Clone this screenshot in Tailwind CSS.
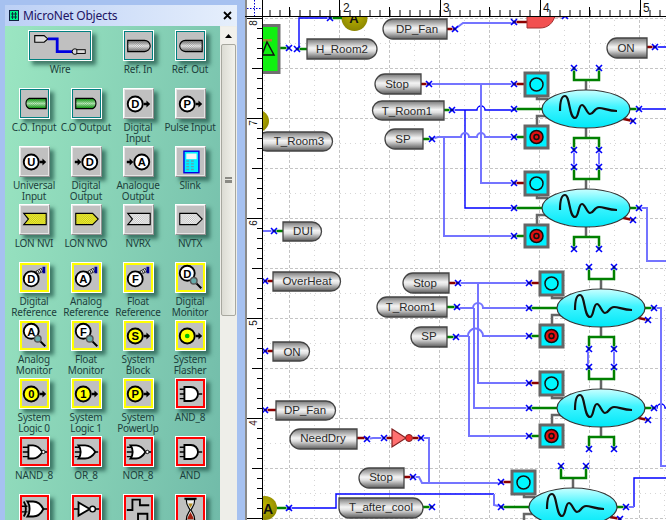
<!DOCTYPE html>
<html>
<head>
<meta charset="utf-8">
<script src="https://cdn.jsdelivr.net/npm/@tailwindcss/browser@4"></script>
</head>
<body class="m-0 overflow-hidden bg-white">
<svg class="absolute w-0 h-0" aria-hidden="true">
  <defs>
    <linearGradient id="gw" x1="0" y1="0" x2="0" y2="1"><stop offset="0" stop-color="#777"/><stop offset=".5" stop-color="#fff"/><stop offset="1" stop-color="#777"/></linearGradient>
    <linearGradient id="gg" x1="0" y1="0" x2="0" y2="1"><stop offset="0" stop-color="#00a000"/><stop offset=".5" stop-color="#c0ffc0"/><stop offset="1" stop-color="#00a000"/></linearGradient>
    <pattern id="chk" width="2" height="2" patternUnits="userSpaceOnUse"><rect width="1" height="1" fill="#000" fill-opacity=".28"/><rect x="1" y="1" width="1" height="1" fill="#000" fill-opacity=".28"/></pattern>
    <g id="arw"><path d="M0,-1.300H3V-3.800L7,0L3,3.800V1.300H0Z" fill="#000"/></g>
    <symbol id="i-wire" viewBox="0 0 64 31"><path d="M5,5H15L19,8.500L15,12H5Z" fill="#ddd" stroke="#000" stroke-width="1.200"/><path d="M19,8.500H29V22H47" fill="none" stroke="#0000e0" stroke-width="3"/><circle cx="48" cy="22" r="3" fill="#ddd" stroke="#000"/><rect x="50" y="20" width="9" height="4" fill="#ddd" stroke="#000"/></symbol>
    <symbol id="i-refin" viewBox="0 0 31 31"><path d="M4,10H22A6,6 0 0 1 22,22H4Z" fill="url(#gw)"/><path d="M4,10H22A6,6 0 0 1 22,22H4Z" fill="url(#chk)" stroke="#000" stroke-width="1.200"/></symbol>
    <symbol id="i-refout" viewBox="0 0 31 31"><path d="M28,10H10A6,6 0 0 0 10,22H28Z" fill="url(#gw)"/><path d="M28,10H10A6,6 0 0 0 10,22H28Z" fill="url(#chk)" stroke="#000" stroke-width="1.200"/></symbol>
    <symbol id="i-coin" viewBox="0 0 31 31"><path d="M28,10H10A6,6 0 0 0 10,21H28Z" fill="url(#gg)"/><path d="M28,10H10A6,6 0 0 0 10,21H28Z" fill="url(#chk)" stroke="#000" stroke-width="1.200"/></symbol>
    <symbol id="i-coout" viewBox="0 0 31 31"><path d="M4,10H22A6,6 0 0 1 22,21H4Z" fill="url(#gg)"/><path d="M4,10H22A6,6 0 0 1 22,21H4Z" fill="url(#chk)" stroke="#000" stroke-width="1.200"/></symbol>
    <symbol id="i-nvi" viewBox="0 0 31 31"><path d="M4,9H28V21H4L9,15Z" fill="#ffff30" stroke="#000" stroke-width="1.200"/><path d="M4,9H28V21H4L9,15Z" fill="url(#chk)"/></symbol>
    <symbol id="i-nvo" viewBox="0 0 31 31"><path d="M4,9H22L28,15L22,21H4Z" fill="#ffff30" stroke="#000" stroke-width="1.200"/><path d="M4,9H22L28,15L22,21H4Z" fill="url(#chk)"/></symbol>
    <symbol id="i-nvrx" viewBox="0 0 31 31"><path d="M4,9H28V21H4L9,15Z" fill="#fff" stroke="#000" stroke-width="1.200"/><path d="M4,9H28V21H4L9,15Z" fill="url(#chk)"/></symbol>
    <symbol id="i-nvtx" viewBox="0 0 31 31"><path d="M4,9H22L28,15L22,21H4Z" fill="#fff" stroke="#000" stroke-width="1.200"/><path d="M4,9H22L28,15L22,21H4Z" fill="url(#chk)"/></symbol>
    <symbol id="i-slink" viewBox="0 0 31 31"><rect x="8.500" y="4.500" width="16" height="23" fill="#00f0ff" stroke="#0000e0" stroke-width="1.500"/><rect x="11" y="7" width="11" height="6" fill="#f4f4f4"/><path d="M11,15h3M16,15h3M11,18h3M16,18h3M11,21h3M16,21h3M11,24h3M16,24h3" stroke="#60a0b0" stroke-width="1.500"/></symbol>
    <symbol id="i-ref" viewBox="0 0 31 31"><path d="M15,12L24,7" stroke="#222" stroke-width="4.500"/><path d="M15,12L24,7" stroke="#fff" stroke-width="3" stroke-dasharray="1 1"/><rect x="24" y="4" width="3" height="7" fill="#000090"/><circle cx="12" cy="17" r="8" fill="#fff" stroke="#000" stroke-width="2"/></symbol>
    <symbol id="i-mon" viewBox="0 0 31 31"><circle cx="12" cy="11" r="8" fill="#fff" stroke="#000" stroke-width="2"/><path d="M21,21L27,27" stroke="#000" stroke-width="2.200"/><circle cx="19" cy="19" r="3.500" fill="#6aa" stroke="#555" stroke-width="1.500"/></symbol>
    <symbol id="i-nand" viewBox="0 0 31 31"><path d="M3,11H9M3,16H9M3,21H9M22,16H29" stroke="#000" stroke-width="1.500"/><path d="M9,9H14C19,9 22,13 24,16C22,19 19,23 14,23H9Z" fill="#fff" stroke="#000" stroke-width="2"/><circle cx="25" cy="16" r="1.800" fill="#fff" stroke="#000"/></symbol>
    <symbol id="i-and" viewBox="0 0 31 31"><path d="M4,11H9M4,16H9M4,21H9M24,16H28" stroke="#000" stroke-width="1.500"/><path d="M9,8.500H16A7.500,7.500 0 0 1 16,23.500H9Z" fill="#fff" stroke="#000" stroke-width="2"/></symbol>
    <symbol id="i-or" viewBox="0 0 31 31"><path d="M3,11H10M3,16H11M3,21H10M24,16H28" stroke="#000" stroke-width="1.500"/><path d="M7,9H14C19,9 23,13 25,16C23,19 19,23 14,23H7C10,19 10,13 7,9Z" fill="#fff" stroke="#000" stroke-width="2"/></symbol>
    <symbol id="i-nor" viewBox="0 0 31 31"><path d="M3,11H10M3,16H11M3,21H10M25,16H29" stroke="#000" stroke-width="1.500"/><path d="M7,9H13C18,9 21,13 23,16C21,19 18,23 13,23H7C10,19 10,13 7,9Z" fill="#fff" stroke="#000" stroke-width="2"/><circle cx="25" cy="16" r="1.800" fill="#fff" stroke="#000"/></symbol>
    <symbol id="i-xor" viewBox="0 0 31 31"><path d="M2,12H8M2,18H8M25,15H29" stroke="#000" stroke-width="1.500"/><path d="M4,7C7,11 7,19 4,23" fill="none" stroke="#000" stroke-width="2"/><path d="M8,7H14C19,7 23,11 25,15C23,19 19,23 14,23H8C11,19 11,11 8,7Z" fill="#fff" stroke="#000" stroke-width="2"/></symbol>
    <symbol id="i-not" viewBox="0 0 31 31"><path d="M2,15H7M25,15H29" stroke="#000" stroke-width="1.500"/><path d="M7,8L19,15L7,22Z" fill="#fff" stroke="#000" stroke-width="2"/><circle cx="22" cy="15" r="3" fill="#fff" stroke="#000" stroke-width="1.500"/></symbol>
    <symbol id="i-step" viewBox="0 0 31 31"><path d="M3,16H9V5H17V11H27M3,28H15V20H25V28H29" fill="none" stroke="#000" stroke-width="2"/></symbol>
    <symbol id="i-hour" viewBox="0 0 31 31"><path d="M9,4H22M9,28H22" stroke="#000" stroke-width="2"/><path d="M11,5C11,12 14,13 15,16C14,19 11,20 11,27H20C20,20 17,19 16,16C17,13 20,12 20,5Z" fill="#f0f0f0" stroke="#000" stroke-width="1.200"/><path d="M12,26C13,22 15,20 15.500,18C16,20 18,22 19,26Z" fill="#a02010"/><path d="M13,9H18L15.500,14Z" fill="#b08a20"/></symbol>
    <g id="mk"><path d="M-3,-3L3,3M-3,3L3,-3" stroke="#0000ff" stroke-width="1.600"/><rect x="-1" y="-1" width="2" height="2" fill="#00008c"/><path d="M-3,0H-2M2,0H3M0,-3V-2M0,2V3" stroke="#fff" stroke-width="1"/></g>
    <linearGradient id="pill" x1="0" y1="0" x2="0" y2="1"><stop offset="0" stop-color="#777"/><stop offset=".45" stop-color="#f4f4f4"/><stop offset=".6" stop-color="#e0e0e0"/><stop offset="1" stop-color="#5c5c5c"/></linearGradient>
    <linearGradient id="ell" x1="0" y1="0" x2="0" y2="1"><stop offset="0" stop-color="#c8ffff"/><stop offset=".45" stop-color="#40f4ff"/><stop offset="1" stop-color="#00e8f8"/></linearGradient>
    <radialGradient id="olive" cx=".5" cy=".4" r=".6"><stop offset="0" stop-color="#bdb500"/><stop offset="1" stop-color="#8c8600"/></radialGradient>
    <g id="grp">
      <path d="M-49,-12V-10H-38M-49,16V7H-40M0,-19V-29M0,19V29" fill="none" stroke="#666" stroke-width="2.500"/>
      <path d="M-72,0H-44M-72,28H-62M-12,-41V-29H13V-41M-12,41V29H13V41M44,0H53" fill="none" stroke="#008000" stroke-width="2.500"/>
      <path d="M-72,-25H-62M33,9L47,12" fill="none" stroke="#8b0000" stroke-width="2.500"/>
      <ellipse rx="44" ry="19" fill="url(#ell)" stroke="#333" stroke-width="1.200"/>
      <path d="M-26,2C-26,-8 -24,-13 -21,-13C-16,-13 -17,9 -11,9C-7,9 -8,-4 -4,-4C-1,-4 1,5 4,5C8,5 8,-1 13,-1C18,-1 22,2 31,2" fill="none" stroke="#111" stroke-width="2.200"/>
      <rect x="-61" y="-36" width="23" height="23" fill="#00f0ff" stroke="#666" stroke-width="3"/>
      <circle cx="-49.500" cy="-24.500" r="6.500" fill="#00f8ff" stroke="#111" stroke-width="1.500"/>
      <rect x="-61" y="17" width="23" height="22" fill="#00f0ff" stroke="#666" stroke-width="3"/>
      <circle cx="-49.500" cy="28" r="6.500" fill="#e01010" stroke="#111" stroke-width="1.500"/>
      <circle cx="-49.500" cy="28" r="2.500" fill="#e01010" stroke="#111" stroke-width="1.500"/>
      <use href="#mk" x="-72" y="-25"/><use href="#mk" x="-72" y="0"/><use href="#mk" x="-72" y="28"/>
      <use href="#mk" x="-12" y="-41"/><use href="#mk" x="13" y="-41"/><use href="#mk" x="-12" y="41"/><use href="#mk" x="13" y="41"/>
      <use href="#mk" x="53" y="0"/><use href="#mk" x="47" y="12"/>
    </g>
  </defs>
</svg>

<div class="flex w-[666px] h-[520px] overflow-hidden font-['Noto_Sans',sans-serif]">
  <!-- docked palette -->
  <div class="w-[245px] h-full shrink-0 bg-[#a6c1f0] pt-[5px] pl-[5px] pr-[8px] flex flex-col">
    <div class="h-[21px] shrink-0 flex items-center pl-[4px] pr-[5px] gap-[4px] bg-gradient-to-r from-[#bcd0f5] to-[#e6effc]">
      <svg class="w-[10px] h-[11px] shrink-0" viewBox="0 0 10 11"><rect x=".5" y=".5" width="9" height="10" fill="#00f08a" stroke="#102040"/><path d="M3.500,2V9M6.500,2V9M2,4H8M2,7H8" stroke="#103040"/></svg>
      <span class="flex-1 text-[12px] tracking-[-0.2px] leading-none text-[#1d1464]">MicroNet Objects</span>
      <svg class="w-[9px] h-[9px] shrink-0" viewBox="0 0 9 9"><path d="M1,1L8,8M8,1L1,8" stroke="#000" stroke-width="1.800"/></svg>
    </div>
    <div class="flex-1 flex min-h-0">
      <div class="w-[215px] h-full overflow-hidden bg-[linear-gradient(100deg,#9be6c2,#71bba9)] pt-[4px] pl-[3px] text-[10px] tracking-[-0.2px] leading-[11px] text-[#1c3f3c] text-center">
        <div class="grid grid-cols-[repeat(4,52px)] auto-rows-[58px]">
          <div class="col-span-2 flex flex-col items-center"><div class="w-[64px] h-[31px] shrink-0 bg-[#c0c0c0] border border-white shadow-[inset_0_0_0_1px_#008080,4px_4px_4px_rgba(20,70,60,0.65)]"><svg class="block w-[62px] h-[29px]" viewBox="0 0 64 31"><use href="#i-wire"/></svg></div><div class="mt-[3px]">Wire</div></div>

          <div class="flex flex-col items-center"><div class="w-[31px] h-[31px] shrink-0 bg-[#c0c0c0] border border-white shadow-[inset_0_0_0_1px_#008080,4px_4px_4px_rgba(20,70,60,0.65)]"><svg class="block w-[29px] h-[29px]" viewBox="0 0 31 31"><use href="#i-refin"/></svg></div><div class="mt-[3px]">Ref. In</div></div>
          <div class="flex flex-col items-center"><div class="w-[31px] h-[31px] shrink-0 bg-[#c0c0c0] border border-white shadow-[inset_0_0_0_1px_#008080,4px_4px_4px_rgba(20,70,60,0.65)]"><svg class="block w-[29px] h-[29px]" viewBox="0 0 31 31"><use href="#i-refout"/></svg></div><div class="mt-[3px]">Ref. Out</div></div>

          <div class="flex flex-col items-center"><div class="w-[31px] h-[31px] shrink-0 bg-[#c0c0c0] border border-white shadow-[inset_0_0_0_1px_#008080,4px_4px_4px_rgba(20,70,60,0.65)]"><svg class="block w-[29px] h-[29px]" viewBox="0 0 31 31"><use href="#i-coin"/></svg></div><div class="mt-[3px] whitespace-nowrap">C.O. Input</div></div>
          <div class="flex flex-col items-center"><div class="w-[31px] h-[31px] shrink-0 bg-[#c0c0c0] border border-white shadow-[inset_0_0_0_1px_#008080,4px_4px_4px_rgba(20,70,60,0.65)]"><svg class="block w-[29px] h-[29px]" viewBox="0 0 31 31"><use href="#i-coout"/></svg></div><div class="mt-[3px] whitespace-nowrap">C.O Output</div></div>
          <div class="flex flex-col items-center"><div class="w-[31px] h-[31px] shrink-0 bg-[#c0c0c0] border border-white border-r-[#909090] border-b-[#909090] shadow-[inset_0_0_0_1px_#e4e4e4,4px_4px_4px_rgba(20,70,60,0.65)]"><svg class="block w-[29px] h-[29px]" viewBox="0 0 31 31"><circle cx="12" cy="16" r="8" fill="#fff" stroke="#000" stroke-width="2"/><text x="12" y="20.500" text-anchor="middle" font-family="Liberation Sans" font-weight="700" font-size="12">D</text><use href="#arw" x="21" y="16"/></svg></div><div class="mt-[3px]">Digital<br>Input</div></div>
          <div class="flex flex-col items-center"><div class="w-[31px] h-[31px] shrink-0 bg-[#c0c0c0] border border-white border-r-[#909090] border-b-[#909090] shadow-[inset_0_0_0_1px_#e4e4e4,4px_4px_4px_rgba(20,70,60,0.65)]"><svg class="block w-[29px] h-[29px]" viewBox="0 0 31 31"><circle cx="12" cy="16" r="8" fill="#fff" stroke="#000" stroke-width="2"/><text x="12" y="20.500" text-anchor="middle" font-family="Liberation Sans" font-weight="700" font-size="12">P</text><use href="#arw" x="21" y="16"/></svg></div><div class="mt-[3px] whitespace-nowrap">Pulse Input</div></div>

          <div class="flex flex-col items-center"><div class="w-[31px] h-[31px] shrink-0 bg-[#c0c0c0] border border-white border-r-[#909090] border-b-[#909090] shadow-[inset_0_0_0_1px_#e4e4e4,4px_4px_4px_rgba(20,70,60,0.65)]"><svg class="block w-[29px] h-[29px]" viewBox="0 0 31 31"><circle cx="12" cy="16" r="8" fill="#fff" stroke="#000" stroke-width="2"/><text x="12" y="20.500" text-anchor="middle" font-family="Liberation Sans" font-weight="700" font-size="12">U</text><use href="#arw" x="21" y="16"/></svg></div><div class="mt-[3px]">Universal<br>Input</div></div>
          <div class="flex flex-col items-center"><div class="w-[31px] h-[31px] shrink-0 bg-[#c0c0c0] border border-white border-r-[#909090] border-b-[#909090] shadow-[inset_0_0_0_1px_#e4e4e4,4px_4px_4px_rgba(20,70,60,0.65)]"><svg class="block w-[29px] h-[29px]" viewBox="0 0 31 31"><use href="#arw" x="3" y="16"/><circle cx="19" cy="16" r="8" fill="#fff" stroke="#000" stroke-width="2"/><text x="19" y="20.500" text-anchor="middle" font-family="Liberation Sans" font-weight="700" font-size="12">D</text></svg></div><div class="mt-[3px]">Digital<br>Output</div></div>
          <div class="flex flex-col items-center"><div class="w-[31px] h-[31px] shrink-0 bg-[#c0c0c0] border border-white border-r-[#909090] border-b-[#909090] shadow-[inset_0_0_0_1px_#e4e4e4,4px_4px_4px_rgba(20,70,60,0.65)]"><svg class="block w-[29px] h-[29px]" viewBox="0 0 31 31"><use href="#arw" x="3" y="16"/><circle cx="19" cy="16" r="8" fill="#fff" stroke="#000" stroke-width="2"/><text x="19" y="20.500" text-anchor="middle" font-family="Liberation Sans" font-weight="700" font-size="12">A</text></svg></div><div class="mt-[3px]">Analogue<br>Output</div></div>
          <div class="flex flex-col items-center"><div class="w-[31px] h-[31px] shrink-0 bg-[#c0c0c0] border border-white border-r-[#909090] border-b-[#909090] shadow-[inset_0_0_0_1px_#e4e4e4,4px_4px_4px_rgba(20,70,60,0.65)]"><svg class="block w-[29px] h-[29px]" viewBox="0 0 31 31"><use href="#i-slink"/></svg></div><div class="mt-[3px]">Slink</div></div>

          <div class="flex flex-col items-center"><div class="w-[31px] h-[31px] shrink-0 bg-[#c0c0c0] border border-white border-r-[#909090] border-b-[#909090] shadow-[inset_0_0_0_1px_#e4e4e4,4px_4px_4px_rgba(20,70,60,0.65)]"><svg class="block w-[29px] h-[29px]" viewBox="0 0 31 31"><use href="#i-nvi"/></svg></div><div class="mt-[3px] whitespace-nowrap">LON NVI</div></div>
          <div class="flex flex-col items-center"><div class="w-[31px] h-[31px] shrink-0 bg-[#c0c0c0] border border-white border-r-[#909090] border-b-[#909090] shadow-[inset_0_0_0_1px_#e4e4e4,4px_4px_4px_rgba(20,70,60,0.65)]"><svg class="block w-[29px] h-[29px]" viewBox="0 0 31 31"><use href="#i-nvo"/></svg></div><div class="mt-[3px] whitespace-nowrap">LON NVO</div></div>
          <div class="flex flex-col items-center"><div class="w-[31px] h-[31px] shrink-0 bg-[#c0c0c0] border border-white border-r-[#909090] border-b-[#909090] shadow-[inset_0_0_0_1px_#e4e4e4,4px_4px_4px_rgba(20,70,60,0.65)]"><svg class="block w-[29px] h-[29px]" viewBox="0 0 31 31"><use href="#i-nvrx"/></svg></div><div class="mt-[3px]">NVRX</div></div>
          <div class="flex flex-col items-center"><div class="w-[31px] h-[31px] shrink-0 bg-[#c0c0c0] border border-white border-r-[#909090] border-b-[#909090] shadow-[inset_0_0_0_1px_#e4e4e4,4px_4px_4px_rgba(20,70,60,0.65)]"><svg class="block w-[29px] h-[29px]" viewBox="0 0 31 31"><use href="#i-nvtx"/></svg></div><div class="mt-[3px]">NVTX</div></div>

          <div class="flex flex-col items-center"><div class="w-[31px] h-[31px] shrink-0 bg-[#c0c0c0] border border-white shadow-[inset_0_0_0_2px_#ffff00,4px_4px_4px_rgba(20,70,60,0.65)]"><svg class="block w-[29px] h-[29px]" viewBox="0 0 31 31"><use href="#i-ref"/><text x="12" y="21.500" text-anchor="middle" font-family="Liberation Sans" font-weight="700" font-size="12">D</text></svg></div><div class="mt-[3px]">Digital<br>Reference</div></div>
          <div class="flex flex-col items-center"><div class="w-[31px] h-[31px] shrink-0 bg-[#c0c0c0] border border-white shadow-[inset_0_0_0_2px_#ffff00,4px_4px_4px_rgba(20,70,60,0.65)]"><svg class="block w-[29px] h-[29px]" viewBox="0 0 31 31"><use href="#i-ref"/><text x="12" y="21.500" text-anchor="middle" font-family="Liberation Sans" font-weight="700" font-size="12">A</text></svg></div><div class="mt-[3px]">Analog<br>Reference</div></div>
          <div class="flex flex-col items-center"><div class="w-[31px] h-[31px] shrink-0 bg-[#c0c0c0] border border-white shadow-[inset_0_0_0_2px_#ffff00,4px_4px_4px_rgba(20,70,60,0.65)]"><svg class="block w-[29px] h-[29px]" viewBox="0 0 31 31"><use href="#i-ref"/><text x="12" y="21.500" text-anchor="middle" font-family="Liberation Sans" font-weight="700" font-size="12">F</text></svg></div><div class="mt-[3px]">Float<br>Reference</div></div>
          <div class="flex flex-col items-center"><div class="w-[31px] h-[31px] shrink-0 bg-[#c0c0c0] border border-white shadow-[inset_0_0_0_2px_#ffff00,4px_4px_4px_rgba(20,70,60,0.65)]"><svg class="block w-[29px] h-[29px]" viewBox="0 0 31 31"><use href="#i-mon"/><text x="12" y="15.500" text-anchor="middle" font-family="Liberation Sans" font-weight="700" font-size="12">D</text></svg></div><div class="mt-[3px]">Digital<br>Monitor</div></div>

          <div class="flex flex-col items-center"><div class="w-[31px] h-[31px] shrink-0 bg-[#c0c0c0] border border-white shadow-[inset_0_0_0_2px_#ffff00,4px_4px_4px_rgba(20,70,60,0.65)]"><svg class="block w-[29px] h-[29px]" viewBox="0 0 31 31"><use href="#i-mon"/><text x="12" y="15.500" text-anchor="middle" font-family="Liberation Sans" font-weight="700" font-size="12">A</text></svg></div><div class="mt-[3px]">Analog<br>Monitor</div></div>
          <div class="flex flex-col items-center"><div class="w-[31px] h-[31px] shrink-0 bg-[#c0c0c0] border border-white shadow-[inset_0_0_0_2px_#ffff00,4px_4px_4px_rgba(20,70,60,0.65)]"><svg class="block w-[29px] h-[29px]" viewBox="0 0 31 31"><use href="#i-mon"/><text x="12" y="15.500" text-anchor="middle" font-family="Liberation Sans" font-weight="700" font-size="12">F</text></svg></div><div class="mt-[3px]">Float<br>Monitor</div></div>
          <div class="flex flex-col items-center"><div class="w-[31px] h-[31px] shrink-0 bg-[#c0c0c0] border border-white shadow-[inset_0_0_0_2px_#ffff00,4px_4px_4px_rgba(20,70,60,0.65)]"><svg class="block w-[29px] h-[29px]" viewBox="0 0 31 31"><circle cx="12" cy="16" r="8" fill="#ffff00" stroke="#000" stroke-width="2"/><text x="12" y="20.500" text-anchor="middle" font-family="Liberation Sans" font-weight="700" font-size="12">S</text><use href="#arw" x="21" y="16"/></svg></div><div class="mt-[3px]">System<br>Block</div></div>
          <div class="flex flex-col items-center"><div class="w-[31px] h-[31px] shrink-0 bg-[#c0c0c0] border border-white shadow-[inset_0_0_0_2px_#ffff00,4px_4px_4px_rgba(20,70,60,0.65)]"><svg class="block w-[29px] h-[29px]" viewBox="0 0 31 31"><circle cx="12" cy="16" r="8" fill="#ffff00" stroke="#000" stroke-width="2"/><circle cx="12" cy="16" r="2.500" fill="#00c000"/><use href="#arw" x="21" y="16"/></svg></div><div class="mt-[3px]">System<br>Flasher</div></div>

          <div class="flex flex-col items-center"><div class="w-[31px] h-[31px] shrink-0 bg-[#c0c0c0] border border-white shadow-[inset_0_0_0_2px_#ffff00,4px_4px_4px_rgba(20,70,60,0.65)]"><svg class="block w-[29px] h-[29px]" viewBox="0 0 31 31"><circle cx="12" cy="16" r="8" fill="#ffff00" stroke="#000" stroke-width="2"/><text x="12" y="20.500" text-anchor="middle" font-family="Liberation Sans" font-weight="700" font-size="12">0</text><use href="#arw" x="21" y="16"/></svg></div><div class="mt-[3px]">System<br>Logic 0</div></div>
          <div class="flex flex-col items-center"><div class="w-[31px] h-[31px] shrink-0 bg-[#c0c0c0] border border-white shadow-[inset_0_0_0_2px_#ffff00,4px_4px_4px_rgba(20,70,60,0.65)]"><svg class="block w-[29px] h-[29px]" viewBox="0 0 31 31"><circle cx="12" cy="16" r="8" fill="#ffff00" stroke="#000" stroke-width="2"/><text x="12" y="20.500" text-anchor="middle" font-family="Liberation Sans" font-weight="700" font-size="12">1</text><use href="#arw" x="21" y="16"/></svg></div><div class="mt-[3px]">System<br>Logic 1</div></div>
          <div class="flex flex-col items-center"><div class="w-[31px] h-[31px] shrink-0 bg-[#c0c0c0] border border-white shadow-[inset_0_0_0_2px_#ffff00,4px_4px_4px_rgba(20,70,60,0.65)]"><svg class="block w-[29px] h-[29px]" viewBox="0 0 31 31"><circle cx="12" cy="16" r="8" fill="#ffff00" stroke="#000" stroke-width="2"/><text x="12" y="20.500" text-anchor="middle" font-family="Liberation Sans" font-weight="700" font-size="12">P</text><use href="#arw" x="21" y="16"/></svg></div><div class="mt-[3px]">System<br>PowerUp</div></div>
          <div class="flex flex-col items-center"><div class="w-[31px] h-[31px] shrink-0 bg-[#c0c0c0] border border-white shadow-[inset_0_0_0_2px_#ff0000,4px_4px_4px_rgba(20,70,60,0.65)]"><svg class="block w-[29px] h-[29px]" viewBox="0 0 31 31"><use href="#i-and"/></svg></div><div class="mt-[3px]">AND_8</div></div>

          <div class="flex flex-col items-center"><div class="w-[31px] h-[31px] shrink-0 bg-[#c0c0c0] border border-white shadow-[inset_0_0_0_2px_#ff0000,4px_4px_4px_rgba(20,70,60,0.65)]"><svg class="block w-[29px] h-[29px]" viewBox="0 0 31 31"><use href="#i-nand"/></svg></div><div class="mt-[3px]">NAND_8</div></div>
          <div class="flex flex-col items-center"><div class="w-[31px] h-[31px] shrink-0 bg-[#c0c0c0] border border-white shadow-[inset_0_0_0_2px_#ff0000,4px_4px_4px_rgba(20,70,60,0.65)]"><svg class="block w-[29px] h-[29px]" viewBox="0 0 31 31"><use href="#i-or"/></svg></div><div class="mt-[3px]">OR_8</div></div>
          <div class="flex flex-col items-center"><div class="w-[31px] h-[31px] shrink-0 bg-[#c0c0c0] border border-white shadow-[inset_0_0_0_2px_#ff0000,4px_4px_4px_rgba(20,70,60,0.65)]"><svg class="block w-[29px] h-[29px]" viewBox="0 0 31 31"><use href="#i-nor"/></svg></div><div class="mt-[3px]">NOR_8</div></div>
          <div class="flex flex-col items-center"><div class="w-[31px] h-[31px] shrink-0 bg-[#c0c0c0] border border-white shadow-[inset_0_0_0_2px_#ff0000,4px_4px_4px_rgba(20,70,60,0.65)]"><svg class="block w-[29px] h-[29px]" viewBox="0 0 31 31"><use href="#i-and"/></svg></div><div class="mt-[3px]">AND</div></div>

          <div class="flex flex-col items-center"><div class="w-[31px] h-[31px] shrink-0 bg-[#c0c0c0] border border-white shadow-[inset_0_0_0_2px_#ff0000,4px_4px_4px_rgba(20,70,60,0.65)]"><svg class="block w-[29px] h-[29px]" viewBox="0 0 31 31"><use href="#i-xor"/></svg></div></div>
          <div class="flex flex-col items-center"><div class="w-[31px] h-[31px] shrink-0 bg-[#c0c0c0] border border-white shadow-[inset_0_0_0_2px_#ff0000,4px_4px_4px_rgba(20,70,60,0.65)]"><svg class="block w-[29px] h-[29px]" viewBox="0 0 31 31"><use href="#i-not"/></svg></div></div>
          <div class="flex flex-col items-center"><div class="w-[31px] h-[31px] shrink-0 bg-[#c0c0c0] border border-white shadow-[inset_0_0_0_2px_#ff0000,4px_4px_4px_rgba(20,70,60,0.65)]"><svg class="block w-[29px] h-[29px]" viewBox="0 0 31 31"><use href="#i-step"/></svg></div></div>
          <div class="flex flex-col items-center"><div class="w-[31px] h-[31px] shrink-0 bg-[#c0c0c0] border border-white shadow-[inset_0_0_0_2px_#ff0000,4px_4px_4px_rgba(20,70,60,0.65)]"><svg class="block w-[29px] h-[29px]" viewBox="0 0 31 31"><use href="#i-hour"/></svg></div></div>
        </div>
      </div>
      <!-- scrollbar -->
      <div class="w-[17px] h-full shrink-0 bg-[#eeeee9] flex flex-col items-center px-[1px]">
        <div class="w-[15px] h-[17px] shrink-0 mt-[1px] bg-[#f2f1ec] flex items-center justify-center"><svg class="w-[7px] h-[4px]" viewBox="0 0 7 4"><path d="M0,4L3.500,0L7,4Z" fill="#000"/></svg></div>
        <div class="w-[15px] h-[272px] shrink-0 rounded-[2px] border border-[#a8a8a0] bg-gradient-to-r from-[#dcdcd4] to-[#f2f2ec] flex items-center justify-center"><div class="w-[7px] h-[6px] border-y-2 border-[#8a8a84] bg-[linear-gradient(#8a8a84,#8a8a84)] bg-[length:100%_1px] bg-center bg-no-repeat"></div></div>
      </div>
    </div>
  </div>

  <!-- drawing canvas: free diagram -->
  <svg class="block w-[421px] h-[520px] shrink-0 bg-white" viewBox="245 0 421 520" font-family="Liberation Sans">
    <!-- grid -->
    <g fill="none" stroke="#d6d6d6" stroke-width="1" stroke-dasharray="1 4">
      <path d="M264.500,0V520M314.500,0V520M364.500,0V520M414.500,0V520M464.500,0V520M514.500,0V520M564.500,0V520M614.500,0V520M664.500,0V520"/>
      <path d="M245,43.500H666M245,93.500H666M245,143.500H666M245,193.500H666M245,243.500H666M245,293.500H666M245,343.500H666M245,393.500H666M245,443.500H666M245,493.500H666"/>
    </g>
    <g fill="none" stroke="#c4c4c4" stroke-width="1" stroke-dasharray="3 2">
      <path d="M289.500,0V520M339.500,0V520M389.500,0V520M439.500,0V520M489.500,0V520M539.500,0V520M589.500,0V520M639.500,0V520"/>
      <path d="M245,18.500H666M245,68.500H666M245,118.500H666M245,168.500H666M245,218.500H666M245,268.500H666M245,318.500H666M245,368.500H666M245,418.500H666M245,468.500H666M245,518.500H666"/>
    </g>

    <circle cx="354.500" cy="18" r="13" fill="url(#olive)"/>
    <text x="354" y="23" text-anchor="middle" font-size="13" font-weight="700" fill="#111">A</text>
    <circle cx="258" cy="121" r="11" fill="url(#olive)"/>
    <circle cx="265" cy="508" r="12" fill="url(#olive)"/>
    <text x="268" y="514" text-anchor="middle" font-size="14" font-weight="700" fill="#111">A</text>

    <!-- dark wires -->
    <g fill="none" stroke="#0000ff" stroke-width="1.400">
      <path d="M299,48V18H328"/>
      <path d="M289,508H336V494H494"/>
      <path d="M639,109H666M655,47H666"/>
      <path d="M452,110H477A4,4 0 0 1 485,110H514"/>
      <path d="M465,110V208H514"/>
      <path d="M654,408H657A4,4 0 0 1 665,408H666"/>
      <path d="M634,507V478H666"/>
    </g>
    <!-- light wires -->
    <g fill="none" stroke="#7474ff" stroke-width="2">
      <path d="M455,29L463,23H514"/>
      <path d="M429,84H514M481,84V183H514"/>
      <path d="M432,139L438,137H461A4,4 0 0 1 469,137H477A4,4 0 0 1 485,137H514"/>
      <path d="M444,137V236H514"/>
      <path d="M574,150V168M599,150V168M588,349V367M614,349V367"/>
      <path d="M639,208H647V261H666"/>
      <path d="M458,283H528M478,283V383H528"/>
      <path d="M457,308H473A5,5 0 0 1 483,308H528M474,308V408H528"/>
      <path d="M456,337L460,336H468A5,5 0 0 1 483,336H528M469,336V436H528"/>
      <path d="M653,308H661V466H666"/>
      <path d="M262,231H274"/>
      <path d="M367,439L373,438H384"/>
      <path d="M421,438H429V483H502"/>
      <path d="M413,477H419L422,483H502"/>
      <path d="M494,494V505L502,507M626,507H634"/>
      <path d="M564,16H575"/>
    </g>

    <!-- stubs -->
    <g fill="none" stroke="#8b0000" stroke-width="2.500">
      <path d="M447,29H455M514,22H527M647,47H655M421,84H429M555,16H565M449,283H458M404,477H413M357,438H367M386,438H392M413,438H421M266,281H274M266,351H274M266,410H276"/>
    </g>
    <g fill="none" stroke="#008000" stroke-width="2.500">
      <path d="M280,48H289M297,49H307M330,18H342M444,110H452M423,139H432M275,231H283M447,307H457M447,337H456M423,507H432M277,508H289M262,141H265"/>
    </g>

    <!-- green block -->
    <rect x="258" y="25.500" width="21" height="47" fill="#10f010" stroke="#707070" stroke-width="3"/>
    <rect x="263" y="39" width="9" height="2.500" fill="#a09030"/>
    <path d="M267,42L274,55H262Z" fill="none" stroke="#111" stroke-width="1.500"/>

    <!-- gates -->
    <path d="M527,16H541C547,16 552,14 555,16C553,23 548,28 540,28H527Z" fill="#f25050" stroke="#a03030"/>
    <path d="M392,429L406,438L392,447Z" fill="#ff7070" stroke="#802020" stroke-width="1.200"/>
    <circle cx="409" cy="438" r="3.500" fill="#f03030" stroke="#802020"/>

    <!-- named nodes -->
    <g fill="url(#pill)" stroke="#444" stroke-width="1.300">
      <path d="M307,39H367A10,10 0 0 1 367,59H307Z"/>
      <path d="M447,19H393A10,10 0 0 0 393,39H447Z"/>
      <path d="M647,38H617A10,10 0 0 0 617,58H647Z"/>
      <path d="M421,74H385A10,10 0 0 0 385,94H421Z"/>
      <path d="M444,101H382A9.500,9.500 0 0 0 382,120H444Z"/>
      <path d="M423,129H395A10,10 0 0 0 395,149H423Z"/>
      <path d="M267,132H323A9.500,9.500 0 0 1 323,151H267A9.500,9.500 0 0 1 267,132Z"/>
      <path d="M283,222H312A9.500,9.500 0 0 1 312,241H283Z"/>
      <path d="M273,272H331A9.500,9.500 0 0 1 331,291H273Z"/>
      <path d="M449,273H413A10,10 0 0 0 413,293H449Z"/>
      <path d="M447,297H387A10,10 0 0 0 387,317H447Z"/>
      <path d="M447,327H421A10,10 0 0 0 421,347H447Z"/>
      <path d="M273,342H300A9.500,9.500 0 0 1 300,361H273Z"/>
      <path d="M276,401H326A9.500,9.500 0 0 1 326,420H276Z"/>
      <path d="M357,429H300A10,10 0 0 0 300,449H357Z"/>
      <path d="M404,468H369A10,10 0 0 0 369,488H404Z"/>
      <path d="M339,498H413A10,10 0 0 1 423,508A10,10 0 0 1 413,518H349A10,10 0 0 1 339,508Z"/>
    </g>
    <g font-size="11.500" fill="#2a2a2a" text-anchor="middle">
      <text x="342" y="53">H_Room2</text>
      <text x="417" y="33">DP_Fan</text>
      <text x="626" y="52">ON</text>
      <text x="397" y="88">Stop</text>
      <text x="407" y="115">T_Room1</text>
      <text x="403" y="143">SP</text>
      <text x="299" y="145">T_Room3</text>
      <text x="303" y="235">DUI</text>
      <text x="307" y="285">OverHeat</text>
      <text x="425" y="287">Stop</text>
      <text x="411" y="311">T_Room1</text>
      <text x="429" y="340">SP</text>
      <text x="292" y="356">ON</text>
      <text x="305" y="414">DP_Fan</text>
      <text x="323" y="442">NeedDry</text>
      <text x="381" y="481">Stop</text>
      <text x="381" y="511">T_after_cool</text>
    </g>

    <!-- controller groups -->
    <use href="#grp" x="586" y="109"/>
    <use href="#grp" x="586" y="208"/>
    <use href="#grp" x="601" y="308"/>
    <use href="#grp" x="601" y="408"/>
    <use href="#grp" x="573" y="507"/>

    <!-- connection markers -->
    <use href="#mk" x="289" y="48"/><use href="#mk" x="297" y="49"/><use href="#mk" x="330" y="18"/>
    <use href="#mk" x="455" y="29"/><use href="#mk" x="514" y="22"/><use href="#mk" x="565" y="16"/>
    <use href="#mk" x="655" y="47"/><use href="#mk" x="429" y="84"/><use href="#mk" x="452" y="110"/>
    <use href="#mk" x="432" y="139"/><use href="#mk" x="274" y="231"/><use href="#mk" x="265" y="281"/>
    <use href="#mk" x="458" y="283"/><use href="#mk" x="457" y="307"/><use href="#mk" x="456" y="337"/>
    <use href="#mk" x="265" y="351"/><use href="#mk" x="265" y="410"/><use href="#mk" x="367" y="439"/>
    <use href="#mk" x="384" y="438"/><use href="#mk" x="421" y="438"/><use href="#mk" x="413" y="477"/>
    <use href="#mk" x="289" y="508"/><use href="#mk" x="432" y="507"/>

    <!-- rulers -->
    <rect x="245" width="17" height="520" fill="#fff"/>
    <rect x="245" width="421" height="16" fill="#fff"/>
    <path d="M246,0V520" stroke="#8a8a8a" stroke-width="2"/>
    <g fill="none" stroke="#000" stroke-width="1">
      <path d="M262.500,0V520M245,16.500H666M247,18.500H262"/>
      <path d="M247,118.500H262M247,218.500H262M247,318.500H262M247,418.500H262M247,518.500H262"/>
      <path d="M339.500,0V16M440.500,0V16M540.500,0V16M640.500,0V16"/>
    </g>
    <path d="M257,28.500H262M257,38.500H262M257,48.500H262M252,68.500H262M257,58.500H262M257,78.500H262M257,88.500H262M257,98.500H262M257,108.500H262M257,128.500H262M257,138.500H262M257,148.500H262M257,158.500H262M252,168.500H262M257,178.500H262M257,188.500H262M257,198.500H262M257,208.500H262M257,228.500H262M257,238.500H262M257,248.500H262M257,258.500H262M252,268.500H262M257,278.500H262M257,288.500H262M257,298.500H262M257,308.500H262M257,328.500H262M257,338.500H262M257,348.500H262M257,358.500H262M252,368.500H262M257,378.500H262M257,388.500H262M257,398.500H262M257,408.500H262M257,428.500H262M257,438.500H262M257,448.500H262M257,458.500H262M252,468.500H262M257,478.500H262M257,488.500H262M257,498.500H262M257,508.500H262" stroke="#000" stroke-width="1"/>
    <line x1="269.500" y1="13" x2="666" y2="13" stroke="#000" stroke-width="6" stroke-dasharray="1 9"/>
    <path d="M289.500,7V16M389.500,7V16M489.500,7V16M589.500,7V16" stroke="#000"/>
    <path d="M254.500,0V16M247,8.500H262" stroke="#0000d0" stroke-dasharray="1.500 1.500"/>
    <g font-size="12" fill="#111">
      <text x="343" y="12">2</text><text x="443" y="12">3</text><text x="543" y="12">4</text><text x="643" y="12">5</text>
    </g>
    <g font-size="10" fill="#111" text-anchor="middle">
      <text transform="translate(257,23) rotate(-90)">8</text>
      <text transform="translate(257,123) rotate(-90)">7</text>
      <text transform="translate(257,223) rotate(-90)">6</text>
      <text transform="translate(257,323) rotate(-90)">5</text>
      <text transform="translate(257,423) rotate(-90)" fill="#401010">4</text>
    </g>
  </svg>
</div>
</body>
</html>
